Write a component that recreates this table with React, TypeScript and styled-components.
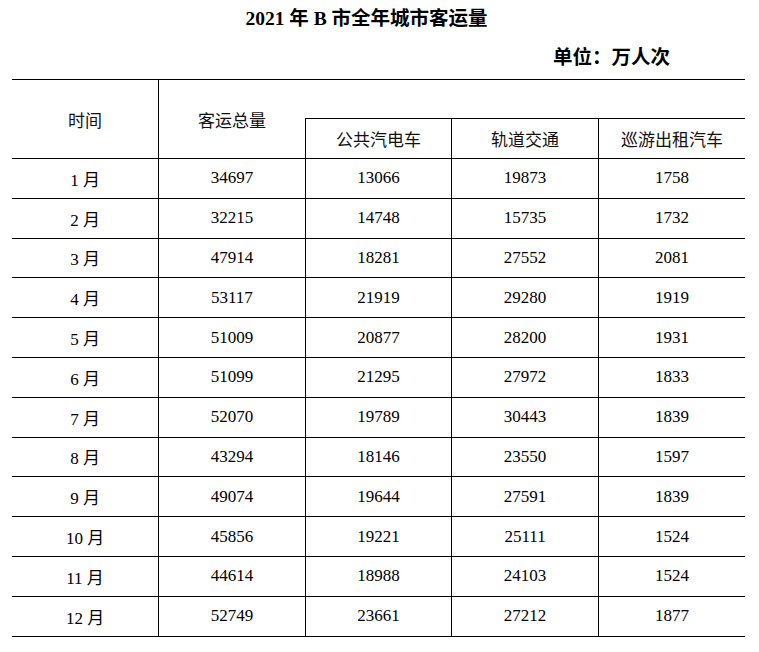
import styled, { createGlobalStyle } from 'styled-components';

const GlobalStyle = createGlobalStyle`
  html, body {
    margin: 0;
    padding: 0;
    background: #ffffff;
  }
  body {
    font-family: "Liberation Serif", "Noto Sans CJK SC", serif;
    color: #000000;
  }
`;

const Page = styled.div`
  width: 733px;
  padding: 0 14px 0 12px;
`;

const Title = styled.h1`
  margin: 0;
  padding-right: 24px;
  height: 38px;
  line-height: 38px;
  text-align: center;
  font-size: 19.5px;
  font-weight: bold;
`;

const Unit = styled.div`
  height: 41px;
  line-height: 40px;
  text-align: right;
  padding-right: 75px;
  font-size: 19.5px;
  font-weight: bold;
`;

const Table = styled.table`
  width: 733px;
  border-collapse: collapse;
  table-layout: fixed;
  border-top: 1px solid #000;
  border-bottom: 1px solid #000;
  font-size: 17px;
`;

const HeadRow = styled.tr<{ $h: number }>`
  height: ${({ $h }) => $h}px;
`;

const BodyRow = styled.tr`
  height: 39.8px;
`;

const Cell = styled.td<{ $noRight?: boolean; $noLeft?: boolean; $edge?: 'left' | 'right' }>`
  padding: 0;
  text-align: center;
  vertical-align: middle;
  border: 1px solid #000;
  ${({ $noRight }) => ($noRight ? 'border-right: none;' : '')}
  ${({ $noLeft }) => ($noLeft ? 'border-left: none;' : '')}
  ${({ $edge }) => ($edge === 'left' ? 'border-left: none;' : '')}
  ${({ $edge }) => ($edge === 'right' ? 'border-right: none;' : '')}
`;

const HeadCell = styled(Cell)`
  font-weight: normal;
  color: #111;
`;

const rows = [
  ['1 月', 34697, 13066, 19873, 1758],
  ['2 月', 32215, 14748, 15735, 1732],
  ['3 月', 47914, 18281, 27552, 2081],
  ['4 月', 53117, 21919, 29280, 1919],
  ['5 月', 51009, 20877, 28200, 1931],
  ['6 月', 51099, 21295, 27972, 1833],
  ['7 月', 52070, 19789, 30443, 1839],
  ['8 月', 43294, 18146, 23550, 1597],
  ['9 月', 49074, 19644, 27591, 1839],
  ['10 月', 45856, 19221, 25111, 1524],
  ['11 月', 44614, 18988, 24103, 1524],
  ['12 月', 52749, 23661, 27212, 1877],
];

export default function App() {
  return (
    <Page>
      <GlobalStyle />
      <Title>2021 年 B 市全年城市客运量</Title>
      <Unit>单位：万人次</Unit>
      <Table>
        <tbody>
          <HeadRow $h={39}>
            <HeadCell as="th" rowSpan={2} $edge="left">时间</HeadCell>
            <HeadCell as="th" rowSpan={2} $noRight>客运总量</HeadCell>
            <HeadCell as="th" colSpan={3} $noLeft $edge="right"></HeadCell>
          </HeadRow>
          <HeadRow $h={40}>
            <HeadCell as="th">公共汽电车</HeadCell>
            <HeadCell as="th">轨道交通</HeadCell>
            <HeadCell as="th" $edge="right">巡游出租汽车</HeadCell>
          </HeadRow>
          {rows.map((r) => (
            <BodyRow key={r[0]}>
              {r.map((v, i) => (
                <Cell key={i} $edge={i === 0 ? 'left' : i === 4 ? 'right' : undefined}>
                  {v}
                </Cell>
              ))}
            </BodyRow>
          ))}
        </tbody>
      </Table>
    </Page>
  );
}
